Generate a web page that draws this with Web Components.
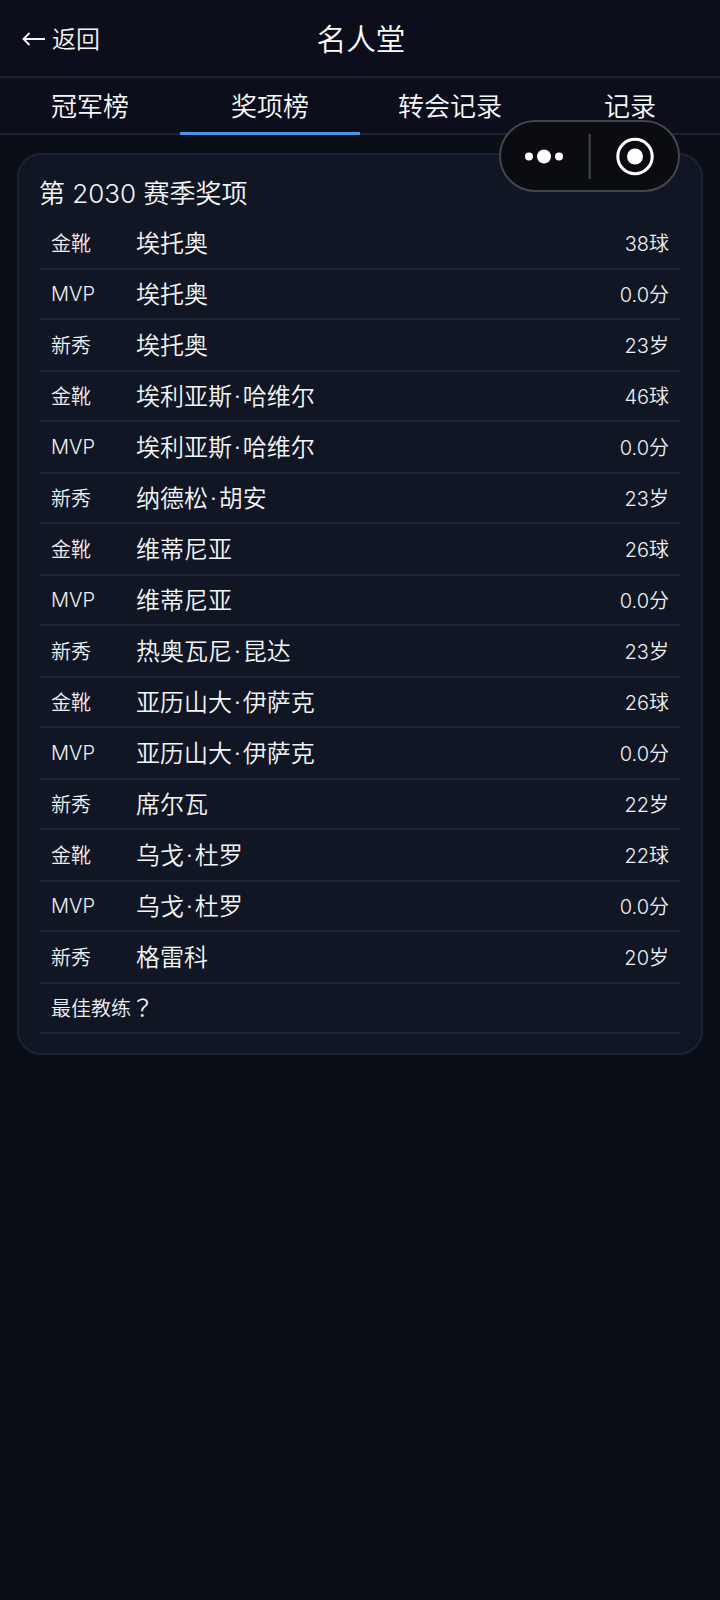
<!DOCTYPE html>
<html lang="zh">
<head>
<meta charset="utf-8">
<title>名人堂</title>
<style>
  html, body { margin: 0; background: #0a0e17; }
  body {
    width: 720px; min-height: 1600px; position: relative;
    font-family: Inter, "Noto Sans CJK SC", sans-serif;
    color: #f5f6f8;
  }
</style>
</head>
<body>
<top-bar title="名人堂" back="返回"></top-bar>
<tab-bar active="1"></tab-bar>
<award-card heading="第 2030 赛季奖项"></award-card>
<mini-capsule></mini-capsule>

<script>
class TopBar extends HTMLElement {
  constructor() {
    super();
    this.shadowDOM = this.attachShadow({ mode: "open" });
  }
  connectedCallback() {
    this.shadowDOM.innerHTML = `
      <style>
        :host { display: block; height: 78px; box-sizing: border-box; border-bottom: 2px solid #1f2331; background: #0c0f1b; }
        .bar { height: 100%; display: grid; grid-template-columns: 1fr auto 1fr; align-items: center; padding: 0 22px; }
        .back { display: flex; align-items: center; gap: 7px; font-size: 24px; font-weight: 350; }
        .back span { padding-bottom: 2px; }
        .back svg { margin-top: 1px; }
        h1 { margin: 0 0 3px 2px; font-size: 29.500px; font-weight: 350; color: #fff; }
      </style>
      <div class="bar">
        <div class="back">
          <svg width="23" height="14" viewBox="0 0 23 14" fill="none" stroke="#f5f6f8" stroke-width="1.800">
            <path d="M1.500 7H23M7.500 1L1.500 7L7.500 13"/>
          </svg>
          <span>${this.getAttribute("back")}</span>
        </div>
        <h1>${this.getAttribute("title")}</h1>
        <div></div>
      </div>`;
  }
}

class TabBar extends HTMLElement {
  constructor() {
    super();
    this.shadowDOM = this.attachShadow({ mode: "open" });
  }
  connectedCallback() {
    const tabs = ["冠军榜", "奖项榜", "转会记录", "记录"];
    const active = Number(this.getAttribute("active"));
    this.shadowDOM.innerHTML = `
      <style>
        :host { display: block; background: #0c0f1b; }
        .tabs { display: grid; grid-template-columns: repeat(4, 180px); height: 57px; box-sizing: border-box; border-bottom: 2px solid #1f2331; }
        .tab { position: relative; display: flex; justify-content: center; align-items: center; height: 55px; box-sizing: border-box; padding-bottom: 2px; font-size: 26px; font-weight: 350; color: #f8f9fb; }
        .tab.on::after { content: ""; position: absolute; left: 0; right: 0; bottom: -2px; height: 3px; background: #4a94ea; }
      </style>
      <div class="tabs">
        ${tabs.map((t, i) => `<div class="tab ${i === active ? "on" : ""}">${t}</div>`).join("")}
      </div>`;
  }
}

class AwardRow extends HTMLElement {
  constructor() {
    super();
    this.shadowDOM = this.attachShadow({ mode: "open" });
  }
  connectedCallback() {
    const [label, name, value] = ["label", "name", "value"].map(a => this.getAttribute(a) || "");
    const shownName = name.replace("·", `<span class="dot">·</span>`);
    const shownLabel = label.replace("？", `<span class="q" lang="zh-Hant">？</span>`);
    this.shadowDOM.innerHTML = `
      <style>
        :host { display: block; height: 52px; box-sizing: border-box; border-bottom: 2px solid #1e2436; }
        :host(:nth-of-type(even)) { height: 50px; }
        .row { height: 100%; display: flex; align-items: center; padding: 0 12px; font-weight: 350; }
        .label { font-size: 20px; white-space: nowrap; width: 85px; flex: none; color: #eff0f3; padding-bottom: 2px; }
        .label.latin { padding-bottom: 0; }
        .name { font-size: 24px; flex: 1; color: #f5f6f8; padding-bottom: 3px; }
        .dot { margin: 0 2px; }
        .value { font-size: 20px; color: #eff0f3; padding-bottom: 2px; }
        .q { font-family: "Noto Sans CJK TC", sans-serif; font-size: 23px; line-height: 1; }
      </style>
      <div class="row"><span class="label ${label === "MVP" ? "latin" : ""}">${shownLabel}</span><span class="name">${shownName}</span><span class="value">${value}</span></div>`;
  }
}

class AwardCard extends HTMLElement {
  constructor() {
    super();
    this.shadowDOM = this.attachShadow({ mode: "open" });
  }
  connectedCallback() {
    const rows = [
      ["金靴", "埃托奥", "38球"], ["MVP", "埃托奥", "0.0分"], ["新秀", "埃托奥", "23岁"],
      ["金靴", "埃利亚斯·哈维尔", "46球"], ["MVP", "埃利亚斯·哈维尔", "0.0分"], ["新秀", "纳德松·胡安", "23岁"],
      ["金靴", "维蒂尼亚", "26球"], ["MVP", "维蒂尼亚", "0.0分"], ["新秀", "热奥瓦尼·昆达", "23岁"],
      ["金靴", "亚历山大·伊萨克", "26球"], ["MVP", "亚历山大·伊萨克", "0.0分"], ["新秀", "席尔瓦", "22岁"],
      ["金靴", "乌戈·杜罗", "22球"], ["MVP", "乌戈·杜罗", "0.0分"], ["新秀", "格雷科", "20岁"],
      ["最佳教练？", "", ""]
    ];
    this.shadowDOM.innerHTML = `
      <style>
        :host { display: block; box-sizing: border-box; width: 686px; height: 902px; margin: 18px 0 0 17px; padding: 20px 20px 0; background: #111624; border: 2px solid #1d2232; border-radius: 24px; }
        h2 { margin: 0; height: 43px; font-size: 26px; line-height: 38px; font-weight: 350; color: #f5f6f8; }
      </style>
      <h2>${this.getAttribute("heading")}</h2>
      ${rows.map(r => `<award-row label="${r[0]}" name="${r[1]}" value="${r[2]}"></award-row>`).join("")}`;
  }
}

class MiniCapsule extends HTMLElement {
  constructor() {
    super();
    this.shadowDOM = this.attachShadow({ mode: "open" });
  }
  connectedCallback() {
    this.shadowDOM.innerHTML = `
      <style>
        :host { display: block; position: absolute; left: 499px; top: 120px; width: 181px; height: 72px; box-sizing: border-box; border: 2px solid #44464e; border-radius: 36px; background: #0b0c12; }
        svg { display: block; position: absolute; left: -2px; top: -2px; }
      </style>
      <svg width="181" height="72" viewBox="0 0 181 72" fill="#fff">
        <circle cx="30" cy="36.500" r="4"/>
        <circle cx="45" cy="36.500" r="7"/>
        <circle cx="60" cy="36.500" r="4"/>
        <rect x="89.700" y="14" width="2" height="45" fill="#44464e"/>
        <circle cx="136" cy="36.500" r="17.200" fill="none" stroke="#fff" stroke-width="3"/>
        <circle cx="136" cy="36.500" r="8"/>
      </svg>`;
  }
}

customElements.define("top-bar", TopBar);
customElements.define("tab-bar", TabBar);
customElements.define("award-row", AwardRow);
customElements.define("award-card", AwardCard);
customElements.define("mini-capsule", MiniCapsule);
</script>
</body>
</html>
